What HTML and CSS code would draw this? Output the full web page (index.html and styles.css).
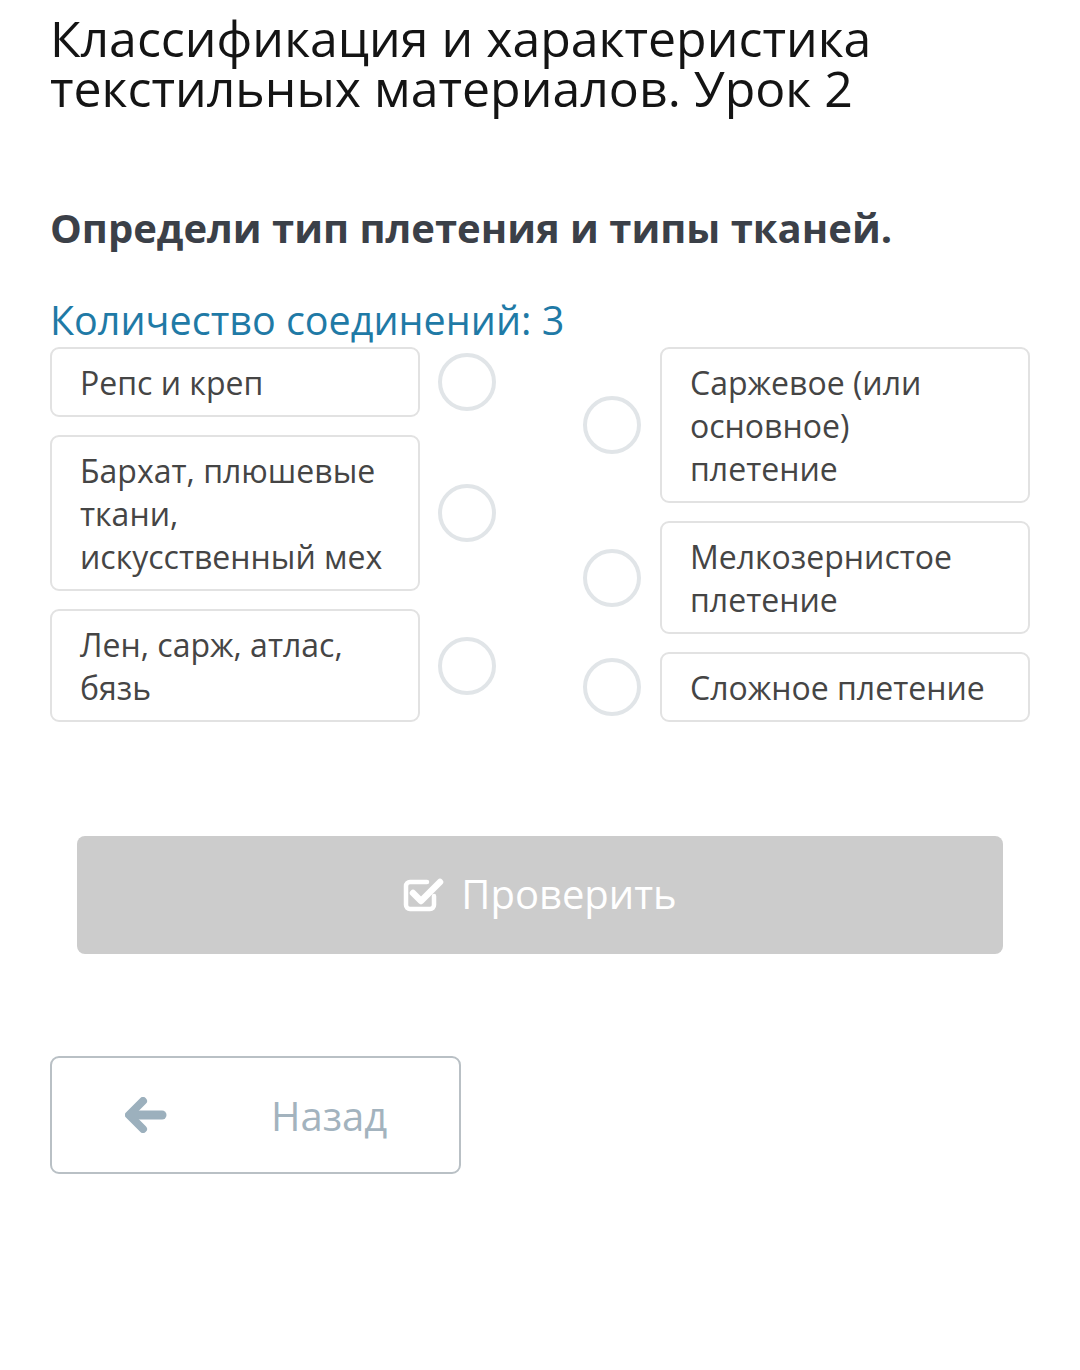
FILE: index.html
```html
<!DOCTYPE html>
<html lang="ru">
<head>
<meta charset="utf-8">
<link rel="stylesheet" href="styles.css">
</head>
<body>
<main class="page">
  <h1 class="title">Классификация и характеристика текстильных материалов. Урок 2</h1>
  <h2 class="question">Определи тип плетения и типы тканей.</h2>
  <div class="count">Количество соединений: 3</div>

  <div class="match">
    <div class="col left">
      <div class="row"><div class="card">Репс и креп</div><span class="dot"></span></div>
      <div class="row"><div class="card">Бархат, плюшевые ткани, искусственный мех</div><span class="dot"></span></div>
      <div class="row"><div class="card">Лен, сарж, атлас, бязь</div><span class="dot"></span></div>
    </div>
    <div class="col right">
      <div class="row"><span class="dot"></span><div class="card">Саржевое (или основное) плетение</div></div>
      <div class="row"><span class="dot"></span><div class="card">Мелкозернистое плетение</div></div>
      <div class="row"><span class="dot"></span><div class="card">Сложное плетение</div></div>
    </div>
  </div>

  <button class="check">
    <svg class="check-icon" width="42" height="40" viewBox="0 0 42 40" aria-hidden="true">
      <path d="M31 22 V31 a4 4 0 0 1 -4 4 H7 a4 4 0 0 1 -4 -4 V12 a4 4 0 0 1 4 -4 H24" fill="none" stroke="#fff" stroke-width="4.5" stroke-linecap="round"/>
      <path d="M10 19 L18 27 L37 8" fill="none" stroke="#fff" stroke-width="6.5" stroke-linecap="round" stroke-linejoin="round"/>
    </svg>
    <span>Проверить</span>
  </button>

  <button class="back">
    <svg class="back-icon" width="42" height="36" viewBox="0 0 42 36" aria-hidden="true">
      <path d="M18 4 L4 18 L18 32" fill="none" stroke="#9cb0bd" stroke-width="8" stroke-linecap="round" stroke-linejoin="round"/>
      <path d="M6 18 H37" fill="none" stroke="#9cb0bd" stroke-width="9" stroke-linecap="round"/>
    </svg>
    <span>Назад</span>
  </button>
</main>
</body>
</html>
```

FILE: styles.css
```css
* { box-sizing: border-box; }
html, body { margin: 0; padding: 0; background: #fff; }
body { font-family: "Open Sans", "Noto Sans", sans-serif; }

.page {
  width: 1080px;
  padding: 13px 50px 0 50px;
}

.title {
  margin: 0;
  font-size: 50px;
  line-height: 50px;
  font-weight: 400;
  color: #141414;
  width: 940px;
}

.question {
  margin: 90px 0 0 0;
  font-size: 40px;
  line-height: 50px;
  font-weight: 700;
  color: #3b4048;
}

.count {
  margin-top: 44px;
  font-size: 39.5px;
  line-height: 46px;
  color: #1f7aa6;
}

.match {
  margin-top: 4px;
  display: flex;
  justify-content: space-between;
}

.col {
  display: flex;
  flex-direction: column;
  gap: 18px;
}

.row {
  display: flex;
  align-items: center;
}
.left .row { gap: 18px; }
.right .row { gap: 19px; }

.card {
  width: 370px;
  border: 2px solid #e2e2e2;
  border-radius: 9px;
  padding: 11.5px 30px 11.5px 28px;
  font-size: 32px;
  line-height: 43px;
  color: #454545;
}

.dot {
  display: block;
  width: 58px;
  height: 58px;
  border: 4px solid #e1e5e8;
  border-radius: 50%;
  flex: none;
}

.check {
  margin: 114px 0 0 27px;
  width: 926px;
  height: 118px;
  border: none;
  border-radius: 8px;
  background: #cccccc;
  color: #fff;
  font-family: inherit;
  font-size: 40px;
  display: flex;
  align-items: center;
  justify-content: center;
  gap: 16px;
  padding: 0 0 4px 0;
}
.check-icon { margin-top: 2px; }

.back {
  display: flex;
  align-items: center;
  margin-top: 102px;
  width: 411px;
  height: 118px;
  border: 2px solid #b9c0c5;
  border-radius: 9px;
  background: #fff;
  padding: 0 0 0 73px;
  gap: 104px;
  font-family: inherit;
  font-size: 40px;
  color: #a3b3be;
}
.back-icon { flex: none; }
```
